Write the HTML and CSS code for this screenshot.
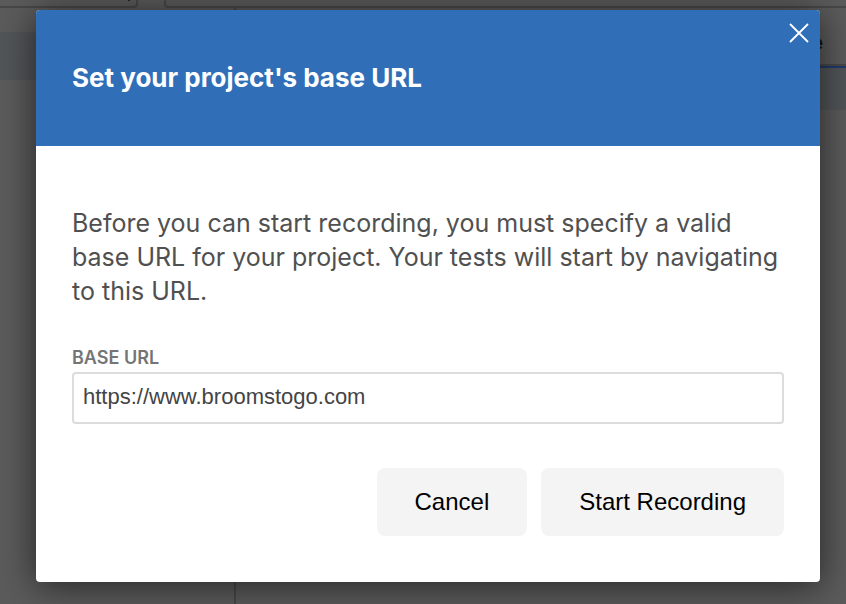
FILE: index.html
```
<!DOCTYPE html>
<html lang="en">
<head>
<meta charset="utf-8">
<meta name="viewport" content="width=device-width, initial-scale=1">
<title>Set your project's base URL</title>
<link rel="stylesheet" href="styles.css">
</head>
<body>
<div class="app" aria-hidden="true">
  <div class="toolbar">
    <div class="tool-box tool-box-small"><span class="caret"></span></div>
    <div class="tool-box tool-box-wide"></div>
  </div>
  <div class="workspace">
    <div class="sidebar"><div class="sidebar-row"></div></div>
    <div class="main">
      <div class="table-head">e</div>
      <div class="table-row"></div>
    </div>
  </div>
</div>
<div class="overlay">
  <form class="dialog" role="dialog" aria-modal="true" aria-labelledby="dialog-title">
    <header class="dialog-header">
      <h1 class="dialog-title" id="dialog-title">Set your project's base URL</h1>
      <button class="close" type="button" aria-label="Close">
        <svg width="20" height="20" viewBox="0 0 20 20" fill="none" stroke="#fff" stroke-width="1.8"><path d="M1 1 L19 19 M19 1 L1 19"/></svg>
      </button>
    </header>
    <div class="dialog-body">
      <p class="message">Before you can start recording, you must specify a valid base URL for your project. Your tests will start by navigating to this URL.</p>
      <label class="field-label" for="base-url">BASE URL</label>
      <input class="field" id="base-url" type="text" value="https://www.broomstogo.com">
      <div class="actions">
        <button class="button" type="button">Cancel</button>
        <button class="button" type="button">Start Recording</button>
      </div>
    </div>
  </form>
</div>
</body>
</html>
```
FILE: styles.css
```
* {
  box-sizing: border-box;
}

body {
  margin: 0;
  background: #5b5b5b;
  font-family: Inter, "Liberation Sans", sans-serif;
}

/* Dimmed page behind the dialog */
.app {
  display: flex;
  flex-direction: column;
  height: 100vh;
  overflow: hidden;
}

.toolbar {
  display: flex;
  gap: 26px;
}

.tool-box {
  height: 8px;
  border: 2px solid #484848;
  border-top: 0;
  border-radius: 0 0 4px 4px;
}

.tool-box-small {
  display: flex;
  justify-content: flex-end;
  width: 138px;
  padding-right: 6px;
  border-left: 0;
  border-bottom-left-radius: 0;
}

.caret {
  width: 2px;
  height: 1px;
  background: #222;
}

.tool-box-wide {
  flex: 1;
  border-right: 0;
  border-bottom-right-radius: 0;
}

.workspace {
  display: flex;
  flex: 1;
}

.sidebar {
  width: 236px;
  padding-top: 24px;
  border-right: 2px solid #484848;
}

.sidebar-row {
  height: 48px;
  background: #525558;
}

.main {
  flex: 1;
  padding-top: 20px;
}

.table-head {
  height: 40px;
  padding-right: 23px;
  border-bottom: 2px solid #203a6c;
  box-shadow: inset 0 -2px #484848;
  color: #111;
  font-size: 22px;
  font-weight: 700;
  line-height: 28px;
  text-align: right;
}

.table-row {
  height: 42px;
  background: #525558;
}

/* Dialog */
.overlay {
  position: absolute;
  inset: 0;
  padding: 10px 26px 22px 36px;
}

.dialog {
  border-radius: 4px;
  background: #fff;
  box-shadow: 0 4px 36px rgba(0, 0, 0, 0.6);
}

.dialog-header {
  position: relative;
  padding: 51px 36px;
  border-radius: 4px 4px 0 0;
  background: #306eb8;
}

.dialog-title {
  margin: 0;
  color: #fff;
  font-size: 26px;
  font-weight: 700;
  line-height: 34px;
}

.close {
  position: absolute;
  top: 13px;
  right: 11px;
  display: flex;
  padding: 0;
  border: 0;
  background: none;
  cursor: pointer;
}

.dialog-body {
  padding: 60px 36px 46px;
}

.message {
  margin: 0 0 40px;
  color: #505050;
  font-size: 25px;
  line-height: 34px;
}

.field-label {
  display: block;
  margin-bottom: 4px;
  color: #757575;
  font-size: 18px;
  font-weight: 600;
  line-height: 20px;
}

.field {
  display: block;
  width: 100%;
  height: 52px;
  padding: 0 9px 2px;
  border: 2px solid #dcdcdc;
  border-radius: 4px;
  background: #fff;
  color: #444;
  font-family: "Liberation Sans", sans-serif;
  font-size: 22px;
}

.actions {
  display: flex;
  justify-content: flex-end;
  gap: 14px;
  margin-top: 44px;
}

.button {
  height: 68px;
  padding: 0 38px;
  border: 0;
  border-radius: 8px;
  background: #f4f4f4;
  color: #000;
  font-family: "Liberation Sans", sans-serif;
  font-size: 24px;
  cursor: pointer;
}
```
